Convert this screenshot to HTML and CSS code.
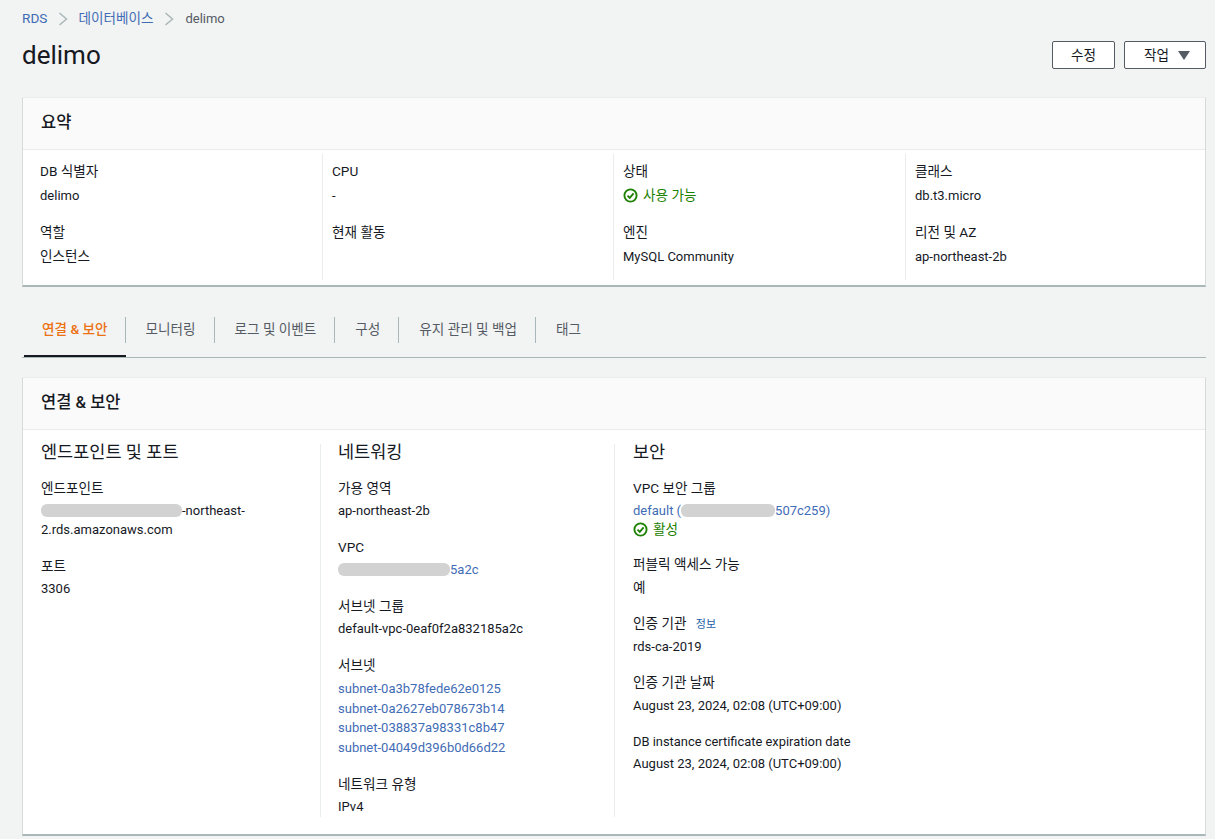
FILE: index.html
```html
<!DOCTYPE html>
<html lang="ko">
<head>
<meta charset="utf-8">
<title>delimo</title>
<link rel="stylesheet" href="styles.css">
</head>
<body>
<nav class="crumbs">
  <a class="link" href="#">RDS</a>
  <svg class="chev" viewBox="0 0 10 14"><path d="M1.500 1 8.500 7l-7 6"/></svg>
  <a class="link" href="#">데이터베이스</a>
  <svg class="chev" viewBox="0 0 10 14"><path d="M1.500 1 8.500 7l-7 6"/></svg>
  <span class="crumb-now">delimo</span>
</nav>
<header class="page-head">
  <h1>delimo</h1>
  <div class="actions">
    <button class="btn btn-edit">수정</button>
    <button class="btn btn-act">작업<svg class="caret" viewBox="0 0 12 10"><path d="M0 1h12L6 10z"/></svg></button>
  </div>
</header>

<section class="card summary">
  <h2 class="card-title">요약</h2>
  <div class="sum-grid">
    <div class="sum-col first">
      <div class="kv"><div class="k">DB 식별자</div><div class="v">delimo</div></div>
      <div class="kv"><div class="k">역할</div><div class="v ko">인스턴스</div></div>
    </div>
    <div class="sum-col">
      <div class="kv"><div class="k">CPU</div><div class="v">-</div></div>
      <div class="kv"><div class="k">현재 활동</div></div>
    </div>
    <div class="sum-col">
      <div class="kv"><div class="k">상태</div><div class="v ko ok"><svg class="check" viewBox="0 0 16 16"><circle cx="8" cy="8" r="6.500"/><path d="M4.800 8.200 7.200 10.500 11.300 5.800"/></svg>사용 가능</div></div>
      <div class="kv"><div class="k">엔진</div><div class="v">MySQL Community</div></div>
    </div>
    <div class="sum-col">
      <div class="kv"><div class="k">클래스</div><div class="v">db.t3.micro</div></div>
      <div class="kv"><div class="k">리전 및 AZ</div><div class="v">ap-northeast-2b</div></div>
    </div>
  </div>
</section>

<div class="tabs">
  <a class="tab active">연결 &amp; 보안</a>
  <a class="tab">모니터링</a>
  <a class="tab">로그 및 이벤트</a>
  <a class="tab">구성</a>
  <a class="tab">유지 관리 및 백업</a>
  <a class="tab">태그</a>
</div>

<section class="card detail">
  <h2 class="card-title">연결 &amp; 보안</h2>
  <div class="det-grid">
    <div class="det-col c1">
      <h3>엔드포인트 및 포트</h3>
      <div class="dkv"><div class="k">엔드포인트</div><div class="v"><span class="redact r1"></span>-northeast-2.rds.amazonaws.com</div></div>
      <div class="dkv"><div class="k">포트</div><div class="v">3306</div></div>
    </div>
    <div class="det-col c2">
      <h3>네트워킹</h3>
      <div class="dkv"><div class="k">가용 영역</div><div class="v">ap-northeast-2b</div></div>
      <div class="dkv"><div class="k">VPC</div><div class="v"><span class="redact r2"></span><a class="link" href="#">5a2c</a></div></div>
      <div class="dkv"><div class="k">서브넷 그룹</div><div class="v">default-vpc-0eaf0f2a832185a2c</div></div>
      <div class="dkv"><div class="k">서브넷</div><div class="v subnets">
        <a class="link" href="#">subnet-0a3b78fede62e0125</a>
        <a class="link" href="#">subnet-0a2627eb078673b14</a>
        <a class="link" href="#">subnet-038837a98331c8b47</a>
        <a class="link" href="#">subnet-04049d396b0d66d22</a>
      </div></div>
      <div class="dkv"><div class="k">네트워크 유형</div><div class="v">IPv4</div></div>
    </div>
    <div class="det-col c3">
      <h3>보안</h3>
      <div class="dkv"><div class="k">VPC 보안 그룹</div><div class="v"><a class="link" href="#">default (</a><span class="redact r3"></span><a class="link" href="#">507c259)</a><div class="ok ko active-line"><svg class="check" viewBox="0 0 16 16"><circle cx="8" cy="8" r="6.500"/><path d="M4.800 8.200 7.200 10.500 11.300 5.800"/></svg>활성</div></div></div>
      <div class="dkv"><div class="k">퍼블릭 액세스 가능</div><div class="v ko">예</div></div>
      <div class="dkv"><div class="k">인증 기관 <a class="info" href="#">정보</a></div><div class="v">rds-ca-2019</div></div>
      <div class="dkv"><div class="k">인증 기관 날짜</div><div class="v">August 23, 2024, 02:08 (UTC+09:00)</div></div>
      <div class="dkv"><div class="k latin">DB instance certificate expiration date</div><div class="v">August 23, 2024, 02:08 (UTC+09:00)</div></div>
    </div>
  </div>
</section>
</body>
</html>
```
FILE: styles.css
```css
* { box-sizing: border-box; }
html, body { height: 100%; overflow: hidden; }
body {
  margin: 0;
  padding: 0 9px 0 22px;
  background: #f2f3f3;
  color: #16191f;
  font: 13.600px/19px Roboto, "Noto Sans CJK KR", sans-serif;
}
.link { color: #3f6cb5; text-decoration: none; }
.crumbs { display: flex; align-items: center; height: 19px; margin-top: 9px; }
.chev { width: 10px; height: 14px; margin: 0 10px 0 11px; fill: none; stroke: #aab7b8; stroke-width: 1.500; }
.crumb-now { color: #545b64; font-size: 13px; margin-left: 1px; }
.page-head { display: flex; justify-content: space-between; align-items: flex-start; margin-top: 7px; height: 62px; }
h1 { margin: 0; font-size: 26px; line-height: 40px; font-weight: 400; }
.actions { display: flex; gap: 9px; margin-top: 6px; }
.btn {
  height: 28px; padding: 0; background: #fff; border: 1px solid #545b64; border-radius: 2px;
  font: inherit; color: #16191f; display: flex; align-items: center; justify-content: center;
}
.btn-edit { width: 63px; }
.btn-act { width: 82px; justify-content: flex-start; padding-left: 19px; }
.caret { width: 12px; height: 10px; margin-left: 9px; fill: #545b64; }
.card { background: #fff; border-top: 1px solid #eaeded; border-left: 1px solid #d5dbdb; border-right: 1px solid #d5dbdb; border-bottom: 2px solid #aab7b8; }
.card-title {
  margin: 0; background: #fafafa; border-bottom: 1px solid #eaeded;
  font-size: 16.500px; font-weight: 500; line-height: 20px; padding: 15px 18px 16px;
}
.summary { height: 190px; }
.sum-grid { display: grid; grid-template-columns: 299px 291px 292px 1fr; margin-top: 4px; }
.sum-col { height: 126px; border-left: 1px solid #eaeded; padding: 8px 9px 0; }
.sum-col.first { border-left: 0; padding-left: 17px; }
.kv { height: 61px; }
.k { line-height: 19px; color: #16191f; }
.k.latin { font-size: 12.900px; }
.v { font-size: 13px; }
.v.ko, .active-line { font-size: 13.600px; }
.kv .v { margin-top: 5px; }
.ok { color: #1d8102; display: flex; align-items: center; }
.check { width: 15px; height: 15px; margin-right: 5px; fill: none; stroke: #1d8102; stroke-width: 2; flex: none; }
.tabs { display: flex; height: 71px; padding-top: 30px; border-bottom: 1px solid #aab7b8; }
.tab { height: 40px; padding: 0 19px 0 20px; line-height: 24px; color: #545b64; position: relative; }
.tab::after { content: ""; position: absolute; right: 0; top: 0; height: 26px; width: 1px; background: #aab7b8; }
.tab:last-child::after { display: none; }
.tab.active { color: #ec7211; font-weight: 500; margin-left: 2px; padding: 0 18px; border-bottom: 2px solid #16191f; }
.detail { margin-top: 19px; height: 459px; }
.det-grid { display: grid; grid-template-columns: 297px 294px 1fr; margin-top: 14px; }
.det-col { height: 373px; border-left: 1px solid #eaeded; padding-left: 18px; }
.c1 { border-left: 0; padding-left: 18px; padding-right: 40px; }
.c2 { padding-left: 17px; }
.c3 { padding-left: 18px; }
h3 { margin: 0; font-size: 17.500px; line-height: 16px; font-weight: 400; height: 34.500px; }
.dkv { margin-bottom: 17.500px; }
.c3 .dkv { margin-bottom: 17px; }
.dkv .v { margin-top: 3.500px; }
.dkv .subnets { margin-top: 4.500px; }
.subnets a { display: block; line-height: 19.500px; }
.redact { display: inline-block; height: 13px; background: #d2d2d2; border-radius: 6px; vertical-align: -2px; }
.r1 { width: 141px; }
.r2 { width: 112px; }
.r3 { width: 94px; }
.info { color: #1a5fa8; font-size: 11px; margin-left: 6px; text-decoration: none; }
.active-line { line-height: 18px; }
```
